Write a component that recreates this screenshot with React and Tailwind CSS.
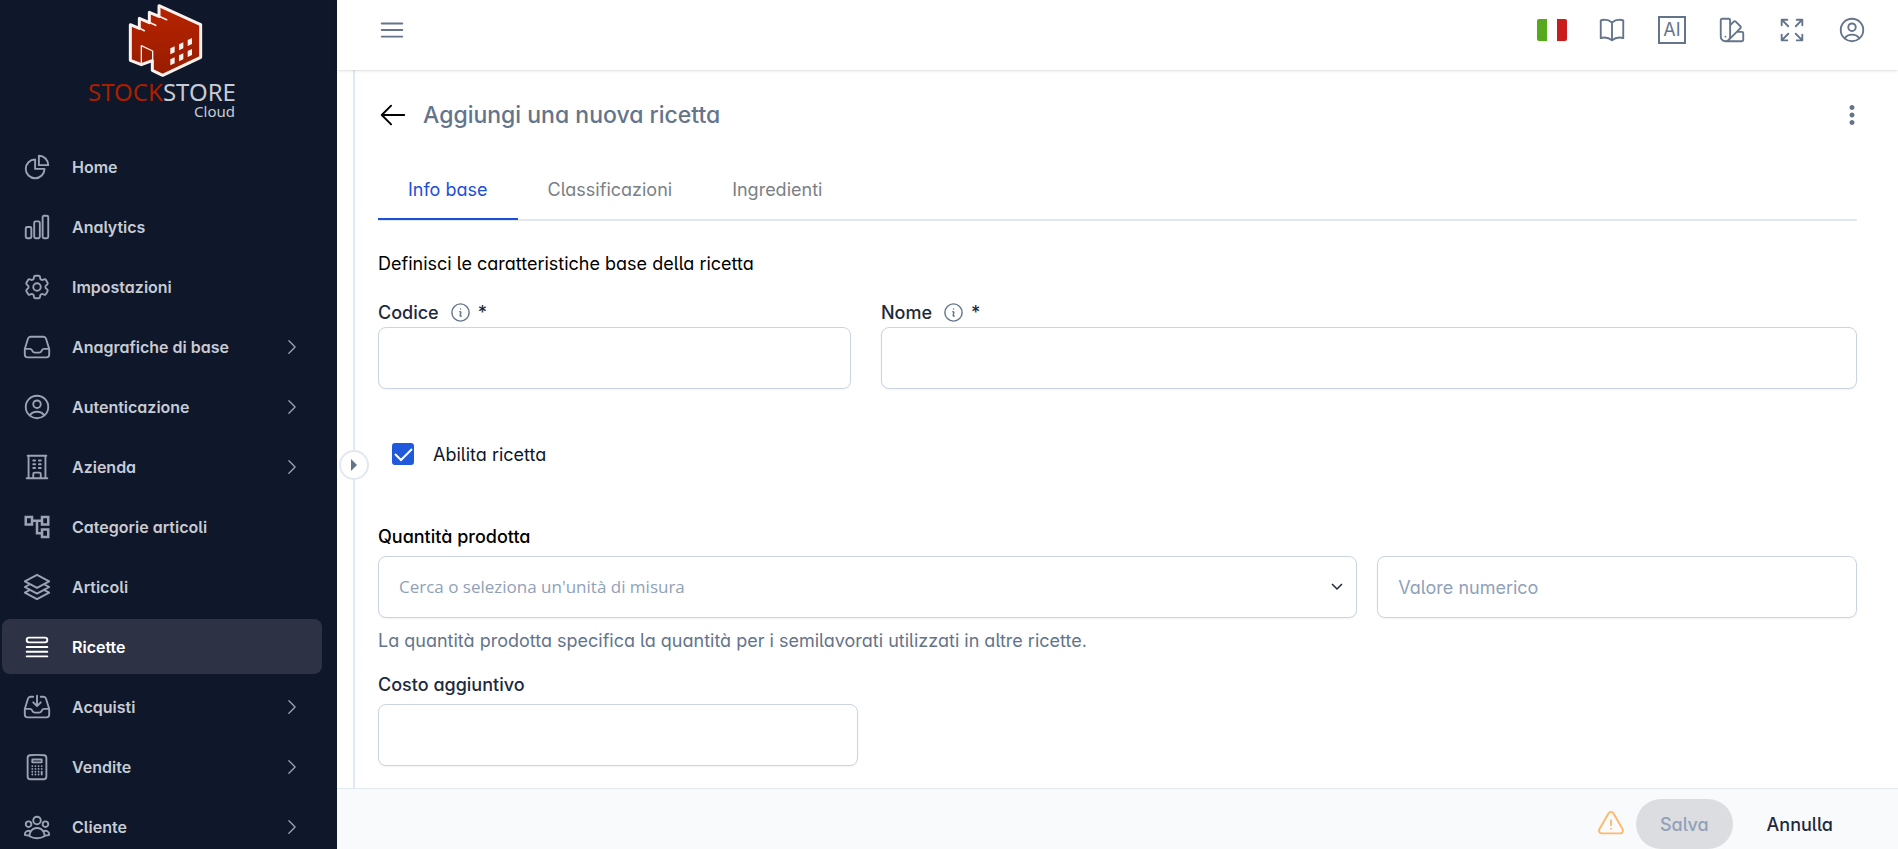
import React, { useState } from "react";
import {
  HiOutlineChartPie,
  HiOutlineChartBar,
  HiOutlineCog6Tooth,
  HiOutlineInbox,
  HiOutlineUserCircle,
  HiOutlineBuildingOffice,
  HiOutlineSquare3Stack3D,
  HiOutlineQueueList,
  HiOutlineInboxArrowDown,
  HiOutlineCalculator,
  HiOutlineUserGroup,
  HiOutlineChevronRight,
  HiOutlineBars3,
  HiOutlineBookOpen,
  HiOutlineSwatch,
  HiOutlineArrowsPointingOut,
  HiOutlineArrowLeft,
  HiOutlineInformationCircle,
  HiOutlineExclamationTriangle,
} from "react-icons/hi2";
import { MdMoreVert, MdOutlineAccountTree } from "react-icons/md";

const menu = [
  { label: "Home", icon: HiOutlineChartPie },
  { label: "Analytics", icon: HiOutlineChartBar },
  { label: "Impostazioni", icon: HiOutlineCog6Tooth },
  { label: "Anagrafiche di base", icon: HiOutlineInbox, group: true },
  { label: "Autenticazione", icon: HiOutlineUserCircle, group: true },
  { label: "Azienda", icon: HiOutlineBuildingOffice, group: true },
  { label: "Categorie articoli", icon: MdOutlineAccountTree },
  { label: "Articoli", icon: HiOutlineSquare3Stack3D },
  { label: "Ricette", icon: HiOutlineQueueList, active: true },
  { label: "Acquisti", icon: HiOutlineInboxArrowDown, group: true },
  { label: "Vendite", icon: HiOutlineCalculator, group: true },
  { label: "Cliente", icon: HiOutlineUserGroup, group: true },
];

const tabs = ["Info base", "Classificazioni", "Ingredienti"];

const fieldClass =
  "block h-[62px] w-full rounded-lg border border-[#cbd5e1] bg-white px-5 text-[18px] text-slate-800 shadow-xs placeholder:text-slate-400 focus:outline-none focus:border-blue-600";

// function: Logo
// description:
// factory mark with the product name below it
const Logo = () => (
  <a href="#home" className="flex flex-col items-center pt-[3px]">
    <svg viewBox="378 9 219 225" className="mb-1 h-[75px] w-[73px] overflow-visible" aria-hidden="true">
      <defs>
        <linearGradient id="factory" x1="0" y1="0" x2="0" y2="1">
          <stop offset="0" stopColor="#b82400" />
          <stop offset="1" stopColor="#961c00" />
        </linearGradient>
      </defs>
      <g strokeLinejoin="round" strokeLinecap="round">
        <path
          d="M391 181V74l27 11V55l30 13V37l29 12V17l125 57v98l-114 54-31-15v-29l-33 12z"
          fill="url(#factory)"
          stroke="#fbf1ee"
          strokeWidth="9"
        />
        <path d="M416 83l17 9M447 67l20 9M477 49l23 10" stroke="#fbf1ee" strokeWidth="5" fill="none" />
        <path d="M424 190v-53l34 16v32" stroke="#fbf1ee" strokeWidth="4" fill="none" />
        <path
          d="M511 145l13-6v18l-13 6zM537 133l13-6v18l-13 6zM563 120l13-6v18l-13 6zM511 178l13-6v18l-13 6zM537 166l13-6v18l-13 6zM563 153l13-6v18l-13 6z"
          fill="#fbf1ee"
        />
      </g>
    </svg>
    <span className="text-[24px] leading-5 font-['Noto_Sans',sans-serif] text-[#c7cbd4]">
      <span className="text-[#a81f00]">STOCK</span>STORE
    </span>
    <span className="w-[146px] text-right font-['Noto_Sans',sans-serif] text-[15px] leading-[18px] text-[#c7cbd4]">
      Cloud
    </span>
  </a>
);

// function: Sidebar
// description:
// dark navigation column, groups show a chevron on the right
const Sidebar = () => (
  <aside className="w-[337px] shrink-0 overflow-hidden bg-[#0f172a] pr-[15px] pl-0.5">
    <div className="h-[139px]">
      <Logo />
    </div>
    <nav className="flex flex-col gap-[5px]">
      {menu.map(({ label, icon: Icon, group, active }) => (
        <a
          key={label}
          href="#menu"
          className={`flex h-[55px] shrink-0 items-center gap-5 rounded-lg pr-5 pl-5 text-[16px] font-semibold ${
            active ? "bg-[#2d3345] text-white" : "text-[#c7cbd4]"
          }`}
        >
          <Icon className={`size-[30px] shrink-0 ${active ? "text-white" : "text-[#9ca3b4]"}`} />
          <span className="flex-1">{label}</span>
          {group && <HiOutlineChevronRight className="size-5 text-[#9ca3b4]" />}
        </a>
      ))}
    </nav>
  </aside>
);

// function: TopBar
// description:
// header with the menu toggle and the shortcut buttons
const TopBar = () => (
  <header className="z-10 flex h-[70px] shrink-0 items-start justify-between bg-white px-[31px] pt-[15px] text-[#64748b] shadow">
    <button aria-label="Menu" className="ml-[9px]">
      <HiOutlineBars3 className="size-[30px]" />
    </button>
    <div className="flex items-center gap-[30px]">
      <button aria-label="Italiano" className="flex h-[22px] w-[30px] overflow-hidden rounded-xs shadow-xs">
        <span className="h-full flex-1 bg-[#56a81c]" />
        <span className="h-full flex-1 bg-white" />
        <span className="h-full flex-1 bg-[#c91c1c]" />
      </button>
      <button aria-label="Guida">
        <HiOutlineBookOpen className="size-[30px]" />
      </button>
      <button aria-label="Assistente" className="flex size-[30px] items-center justify-center">
        <span className="flex size-7 items-center justify-center border-2 border-[#64748b] text-[18px] leading-none">
          AI
        </span>
      </button>
      <button aria-label="Tema">
        <HiOutlineSwatch className="size-[30px]" />
      </button>
      <button aria-label="Schermo intero">
        <HiOutlineArrowsPointingOut className="size-[30px]" />
      </button>
      <button aria-label="Profilo">
        <HiOutlineUserCircle className="size-[30px]" />
      </button>
    </div>
  </header>
);

// function: RequiredField
// parameters:
//   id (string)
//   label (string)
//   className (string)
// description:
// labelled text box with the info icon and the required mark
const RequiredField = ({ id, label, className }) => (
  <div className={className}>
    <label htmlFor={id} className="flex h-[30px] items-center text-[18px] font-medium text-slate-800">
      {label}
      <HiOutlineInformationCircle className="mr-1.5 ml-2.5 size-[23px] text-[#64748b]" />*
    </label>
    <input id={id} type="text" required className={fieldClass} />
  </div>
);

const App = () => {
  const [tab, setTab] = useState("Info base");
  const [enabled, setEnabled] = useState(true);

  return (
    <div className="flex h-screen overflow-hidden bg-white font-[Inter,sans-serif] text-[18px] [font-feature-settings:'cv11','cv05']">
      <Sidebar />
      <div className="flex min-w-0 flex-1 flex-col">
        <TopBar />
        <div className="flex min-h-0 flex-1">
          {/* drawer handle */}
          <div className="relative ml-4 w-0.5 shrink-0 bg-slate-200">
            <button
              aria-label="Apri pannello"
              className="absolute top-[380px] left-1/2 flex size-[30px] -translate-x-1/2 items-center justify-center rounded-full border-2 border-slate-200 bg-white"
            >
              <svg viewBox="0 0 6 12" className="h-3 w-1.5 text-[#64748b]" aria-hidden="true">
                <path d="M0 0l6 6-6 6z" fill="currentColor" />
              </svg>
            </button>
          </div>
          <main className="min-w-0 flex-1 overflow-y-auto pr-[41px] pl-[23px]">
            <div className="flex h-[90px] items-center justify-between">
              <div className="flex items-center gap-[15px]">
                <button aria-label="Indietro">
                  <HiOutlineArrowLeft className="size-[30px] text-black" />
                </button>
                <h1 className="text-[23px] font-medium text-[#64748b]">Aggiungi una nuova ricetta</h1>
              </div>
              <button aria-label="Altre azioni" className="-mr-2.5">
                <MdMoreVert className="size-[30px] text-[#64748b]" />
              </button>
            </div>

            <div role="tablist" className="flex h-[61px] border-b-2 border-slate-200">
              {tabs.map((name) => (
                <button
                  key={name}
                  role="tab"
                  aria-selected={tab === name}
                  onClick={() => setTab(name)}
                  className={`-mb-px border-b-2 px-[30px] ${
                    tab === name ? "border-[#1d4ed8] text-[#1d4ed8]" : "border-transparent text-[#7b7f86]"
                  }`}
                >
                  {name}
                </button>
              ))}
            </div>

            <p className="pt-[30px] leading-[26px] text-black">Definisci le caratteristiche base della ricetta</p>

            <div className="mt-5 grid grid-cols-3 gap-x-[30px]">
              <RequiredField id="codice" label="Codice" />
              <RequiredField id="nome" label="Nome" className="col-span-2" />
            </div>

            <label className="mt-[50px] flex h-[30px] w-fit items-center gap-[19px] pl-3.5 text-slate-900">
              <span className="relative flex">
                <input
                  type="checkbox"
                  checked={enabled}
                  onChange={(e) => setEnabled(e.target.checked)}
                  className="size-[22px] appearance-none rounded-[3px] border-2 border-slate-400 checked:border-[#2159dc] checked:bg-[#2159dc]"
                />
                {enabled && (
                  <svg
                    viewBox="0 0 22 22"
                    className="pointer-events-none absolute inset-0 size-[22px]"
                    fill="none"
                    stroke="#fff"
                    strokeWidth="2"
                  >
                    <path d="M3 11l6 6L20 6" />
                  </svg>
                )}
              </span>
              Abilita ricetta
            </label>

            <div className="mt-[55px] grid grid-cols-3 gap-x-5">
              <label htmlFor="unita" className="col-span-3 h-8 leading-[26px] font-medium text-black">
                Quantità prodotta
              </label>
              <div className="relative col-span-2">
                <select
                  id="unita"
                  defaultValue=""
                  className="block h-[62px] w-full appearance-none rounded-lg border border-[#cbd5e1] bg-white px-5 font-['Open_Sans',sans-serif] text-[17px] text-slate-400 shadow-xs"
                >
                  <option value="">Cerca o seleziona un'unità di misura</option>
                </select>
                <svg
                  viewBox="0 0 12 8"
                  className="pointer-events-none absolute top-[27px] right-3.5 h-2 w-3"
                  fill="none"
                  stroke="#1e293b"
                  strokeWidth="1.5"
                >
                  <path d="M1 1l5 5 5-5" />
                </svg>
              </div>
              <input type="number" aria-label="Valore numerico" placeholder="Valore numerico" className={fieldClass} />
              <p className="col-span-3 pt-2.5 leading-[26px] text-[#64748b]">
                La quantità prodotta specifica la quantità per i semilavorati utilizzati in altre ricette.
              </p>
            </div>

            <div className="mt-[18px] grid grid-cols-3 gap-x-5">
              <div>
                <label htmlFor="costo" className="block h-8 leading-[26px] font-medium text-slate-800">
                  Costo aggiuntivo
                </label>
                <input id="costo" type="text" className={fieldClass} />
              </div>
            </div>
          </main>
        </div>
        <footer className="flex shrink-0 items-center justify-end gap-2.5 border-t border-slate-200 bg-slate-50 pt-2.5 pr-[41px]">
          <HiOutlineExclamationTriangle className="size-[30px] text-orange-300" />
          <button disabled className="h-[50px] rounded-full bg-[#dcdde0] px-6 font-medium text-slate-400">
            Salva
          </button>
          <button className="h-[50px] rounded-full px-6 font-medium text-slate-800">Annulla</button>
        </footer>
      </div>
    </div>
  );
};

export default App;
